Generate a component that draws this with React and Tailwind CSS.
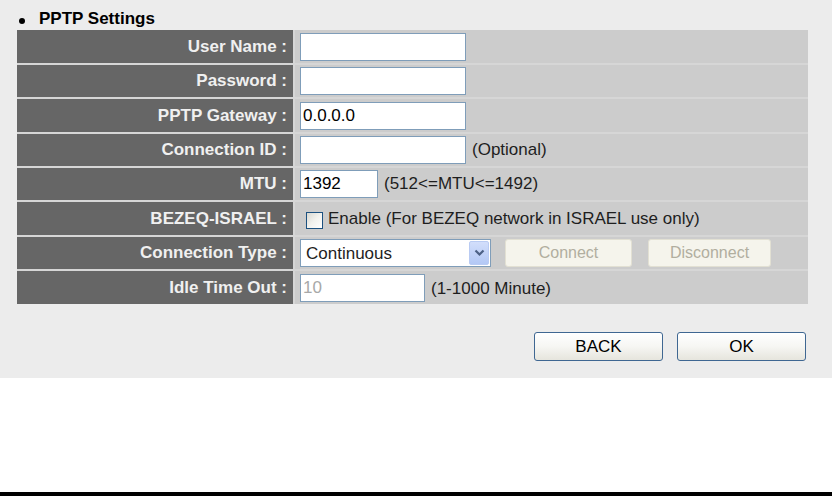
import React, { useState } from 'react';

// XP style text field
function TextField({ value = '', className = '', muted = false }) {
  return (
    <input
      type="text"
      readOnly
      value={value}
      className={`h-[28px] border border-[#7f9db9] bg-white px-[2px] text-[17px] leading-none outline-none ${
        muted ? 'text-[#a8a8a8]' : 'text-black'
      } ${className}`}
    />
  );
}

function ChevronDown() {
  return (
    <svg width="11" height="8" viewBox="0 0 11 8">
      <path d="M1.5 1.5 L5.5 5.5 L9.5 1.5" fill="none" stroke="#4d6185" strokeWidth="2.2" />
    </svg>
  );
}

function XpButton({ children, disabled = false, className = '' }) {
  if (disabled) {
    return (
      <button
        type="button"
        className={`h-[28px] rounded-[3px] border border-[#e2e0d3] bg-[#f5f4ec] text-[16px] text-[#b1ae9f] ${className}`}
      >
        {children}
      </button>
    );
  }
  return (
    <button
      type="button"
      className={`h-[29px] rounded-[3px] border border-[#3f6792] bg-gradient-to-b from-white via-[#f6f6f3] to-[#e6e5dd] text-[17px] text-black ${className}`}
    >
      {children}
    </button>
  );
}

const App = () => {
  const [bezeq, setBezeq] = useState(false);

  const rows = [
    { label: 'User Name :', h: 'h-[33px]', content: <TextField className="w-[166px]" /> },
    { label: 'Password :', h: 'h-[32px]', content: <TextField className="w-[166px]" /> },
    { label: 'PPTP Gateway :', h: 'h-[33px]', content: <TextField className="w-[166px]" value="0.0.0.0" /> },
    {
      label: 'Connection ID :',
      h: 'h-[32px]',
      content: (
        <>
          <TextField className="w-[166px]" />
          <span className="ml-[6px]">(Optional)</span>
        </>
      ),
    },
    {
      label: 'MTU :',
      h: 'h-[32px]',
      content: (
        <>
          <TextField className="w-[78px]" value="1392" />
          <span className="ml-[6px]">(512&lt;=MTU&lt;=1492)</span>
        </>
      ),
    },
    {
      label: 'BEZEQ-ISRAEL :',
      h: 'h-[33px]',
      content: (
        <label className="flex items-center" onClick={() => setBezeq((prev) => !prev)}>
          <span className="ml-[6px] mt-[3px] flex h-[17px] w-[17px] items-center justify-center border border-[#1c5180] bg-gradient-to-br from-[#d8d8d2] via-[#f2f2ee] to-white">
            {bezeq && <span className="text-[12px] leading-none text-[#21a121]">✓</span>}
          </span>
          <span className="ml-[5px]">Enable (For BEZEQ network in ISRAEL use only)</span>
        </label>
      ),
    },
    {
      label: 'Connection Type :',
      h: 'h-[32px]',
      content: (
        <>
          <div className="flex h-[28px] w-[191px] items-center border border-[#7f9db9] bg-white pl-[5px] pr-[1px]">
            <span className="flex-1 pt-[2px]">Continuous</span>
            <span className="flex h-[24px] w-[20px] items-center justify-center rounded-[2px] border border-[#b9cbf3] bg-gradient-to-b from-[#d2defb] to-[#b3c8f5]">
              <ChevronDown />
            </span>
          </div>
          <XpButton disabled className="ml-[14px] w-[127px]">Connect</XpButton>
          <XpButton disabled className="ml-[16px] w-[123px]">Disconnect</XpButton>
        </>
      ),
    },
    {
      label: 'Idle Time Out :',
      h: 'h-[33px]',
      content: (
        <>
          <TextField className="w-[125px]" value="10" muted />
          <span className="ml-[6px] pt-[2px]">(1-1000 Minute)</span>
        </>
      ),
    },
  ];

  return (
    <div className="flex h-[496px] w-[832px] flex-col font-['Liberation_Sans',Arial,sans-serif]">
      <div className="h-[378px] bg-[#ececec] pl-[17px]">
        {/* section title */}
        <div className="flex h-[30px] items-start pt-[9px] text-[17px] font-bold leading-[20px] text-black">
          <span className="ml-[2px] mr-[14px] mt-[9px] h-[6px] w-[6px] rounded-full bg-black" />
          <span>PPTP Settings</span>
        </div>

        {/* settings table */}
        <div className="grid w-[791px] grid-cols-[276px_513px] gap-[2px] bg-[#d6d6d6]">
          {rows.map((row) => (
            <React.Fragment key={row.label}>
              <div
                className={`${row.h} flex items-center justify-end bg-[#666666] pr-[6px] text-[17px] font-bold text-[#f0f0f0]`}
              >
                {row.label}
              </div>
              <div className={`${row.h} flex items-center bg-[#cccccc] pl-[5px] text-[17px] text-[#1e1e1e]`}>
                {row.content}
              </div>
            </React.Fragment>
          ))}
        </div>

        {/* bottom buttons */}
        <div className="mt-[28px] flex w-[789px] justify-end gap-[14px]">
          <XpButton className="w-[129px]">BACK</XpButton>
          <XpButton className="w-[129px]">OK</XpButton>
        </div>
      </div>
      <div className="flex-1 bg-white" />
      <div className="h-[4px] bg-black" />
    </div>
  );
};

export default App;
